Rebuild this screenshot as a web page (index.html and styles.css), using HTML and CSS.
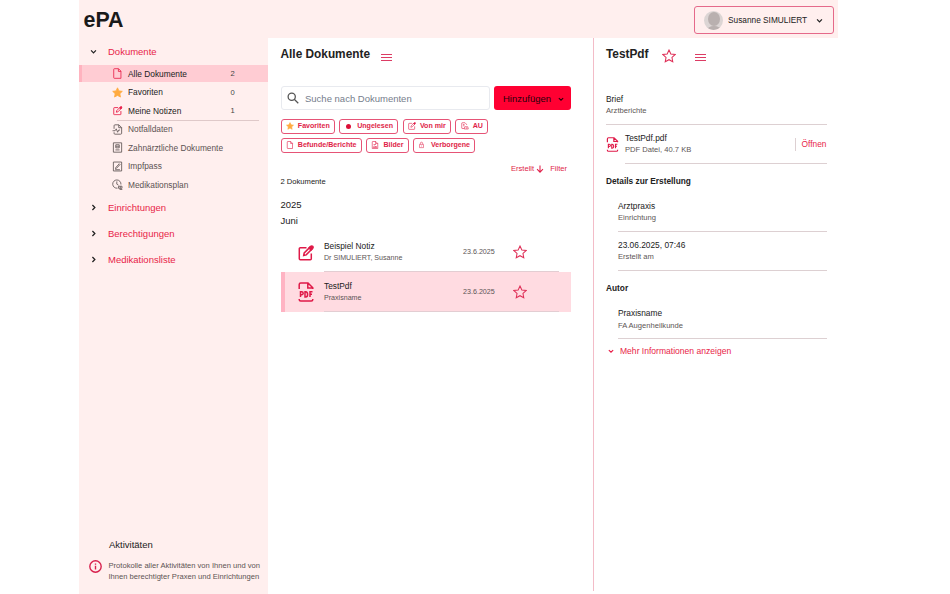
FILE: index.html
```html
<!DOCTYPE html>
<html lang="de">
<head>
  <meta charset="UTF-8">
  <meta name="viewport" content="width=device-width, initial-scale=1.0">
  <title>ePA</title>
  <link rel="stylesheet" href="styles.css">
</head>
<body>

<!-- Icons -->
<svg class="sprite" xmlns="http://www.w3.org/2000/svg">
  <symbol id="i-down" viewBox="0 0 10 10"><path d="M2.300 3.800l2.700 2.700 2.700-2.700"/></symbol>
  <symbol id="i-right" viewBox="0 0 10 10"><path d="M3.800 2.300l2.700 2.700-2.700 2.700"/></symbol>
  <symbol id="i-file" viewBox="0 0 16 16"><path d="M3.500 1h6L13 4.500V15H3.500a1 1 0 0 1-1-1V2a1 1 0 0 1 1-1zM9.300 1.200V5H13"/></symbol>
  <symbol id="i-star" viewBox="0 0 16 16"><path d="M8 1.200l2.100 4.500 4.900.6-3.600 3.400.9 4.900L8 12.200l-4.300 2.400.9-4.900L1 6.300l4.900-.6z"/></symbol>
  <symbol id="i-edit" viewBox="0 0 16 16"><path d="M8.500 2.700H2.300a1 1 0 0 0-1 1v10a1 1 0 0 0 1 1h10a1 1 0 0 0 1-1V8.500M5.700 10.500l.5-2.600L12 2.100l2 2-5.800 5.800z"/><path class="fill" d="M11 3l2-1.900q1-.5 1.700.2t.2 1.700L13 5z"/></symbol>
  <symbol id="i-emergency" viewBox="0 0 16 16"><path d="M3 7V2.500A1.300 1.300 0 0 1 4.300 1.200H10l4 4v8.300a1.300 1.300 0 0 1-1.300 1.300H4.300A1.300 1.300 0 0 1 3 13.500V12M9.800 1.400v4H14M.8 9.800h3.700L6.200 7l2 5 1.500-3.200h2"/></symbol>
  <symbol id="i-tooth" viewBox="0 0 16 16"><path d="M2 1.200h12v13.600H2zM5.500 4h5v4.500h-5zM5.500 6.200h5M5 11.500h6"/></symbol>
  <symbol id="i-vaccine" viewBox="0 0 16 16"><path d="M2 1.500h12v13H2zM5.500 9.500l5-5.500 1.200 1.200-5 5.300-1.700.5zM4.500 12.700h7"/></symbol>
  <symbol id="i-plan" viewBox="0 0 16 16"><path d="M8 13.300A6 6 0 1 1 13 8M7 3.500v4l2.500 1.500M9.500 10.500h5v3h-5zM11 15.200h4M12 10.500v3"/></symbol>
  <symbol id="i-au" viewBox="0 0 16 16"><path d="M6 13H2.500a1 1 0 0 1-1-1V2.500a1 1 0 0 1 1-1H8L11 4.500V6M4 5h3M4 7.500h3M7.500 9.500h6l1 4.500h-8zM10 12h2"/></symbol>
  <symbol id="i-image" viewBox="0 0 16 16"><path d="M3.500 1h6L13.500 5v10h-11V2a1 1 0 0 1 1-1zM9 1v4h4.500M4.500 13l2.200-3.500 2 2.200L10 10l1.500 3zM5 7h5"/></symbol>
  <symbol id="i-lock" viewBox="0 0 16 16"><path d="M3.500 6.500h9V14h-9zM5.500 6.300V4a2.500 2.500 0 0 1 5 0v2.300M8 9.300v2"/></symbol>
  <symbol id="i-pdf" viewBox="0 0 16 20"><path d="M1.200 7V2.500A1.500 1.500 0 0 1 2.700 1H10l4.800 4.800V7M9.800 1.200V6h4.800M1.200 17v.5A1.500 1.500 0 0 0 2.700 19h10.600a1.500 1.500 0 0 0 1.500-1.500V17"/><path class="letters" d="M2.500 15V9.700h1.200a1.500 1.500 0 0 1 0 3H2.500M7 9.700V15h.7q1.900-.1 1.900-2.600T7.700 9.700zM12 15V9.700h2.500M12 12.300h2"/></symbol>
  <symbol id="i-info" viewBox="0 0 16 16"><circle cx="8" cy="8" r="7"/><path d="M8 7v4.800M8 4.200v1.600"/></symbol>
  <symbol id="i-search" viewBox="0 0 16 16"><circle cx="6.300" cy="6.300" r="4.800"/><path d="M9.700 9.700l5.300 5.300"/></symbol>
  <symbol id="i-arrow" viewBox="0 0 10 10"><path d="M5 .5v8.500M1.300 5.300L5 9l3.700-3.700"/></symbol>
</svg>

<div class="app">
  <header class="header">
    <h1>ePA</h1>
    <button class="account">
      <span class="avatar"></span>
      <span>Susanne SIMULIERT</span>
      <svg class="chevron"><use href="#i-down"/></svg>
    </button>
  </header>

  <div class="columns">
    <nav class="sidebar">
      <div class="group open"><svg class="chevron"><use href="#i-down"/></svg>Dokumente</div>
      <ul class="menu">
        <li class="active"><svg class="icon red"><use href="#i-file"/></svg><span>Alle Dokumente</span><b>2</b></li>
        <li><svg class="icon gold"><use href="#i-star"/></svg><span>Favoriten</span><b>0</b></li>
        <li><svg class="icon red edit"><use href="#i-edit"/></svg><span>Meine Notizen</span><b>1</b></li>
      </ul>
      <ul class="menu categories">
        <li><svg class="icon"><use href="#i-emergency"/></svg><span>Notfalldaten</span></li>
        <li><svg class="icon"><use href="#i-tooth"/></svg><span>Zahnärztliche Dokumente</span></li>
        <li><svg class="icon"><use href="#i-vaccine"/></svg><span>Impfpass</span></li>
        <li><svg class="icon"><use href="#i-plan"/></svg><span>Medikationsplan</span></li>
      </ul>
      <div class="group"><svg class="chevron"><use href="#i-right"/></svg>Einrichtungen</div>
      <div class="group"><svg class="chevron"><use href="#i-right"/></svg>Berechtigungen</div>
      <div class="group"><svg class="chevron"><use href="#i-right"/></svg>Medikationsliste</div>

      <div class="activities">
        <h3>Aktivitäten</h3>
        <div class="activities-info">
          <svg class="info"><use href="#i-info"/></svg>
          <p>Protokolle aller Aktivitäten von Ihnen und von<br>Ihnen berechtigter Praxen und Einrichtungen</p>
        </div>
      </div>
    </nav>

    <main class="documents">
      <div class="title">
        <h2>Alle Dokumente</h2>
        <span class="burger"></span>
      </div>
      <div class="toolbar">
        <div class="search"><svg><use href="#i-search"/></svg>Suche nach Dokumenten</div>
        <button class="add">Hinzufügen<svg class="chevron"><use href="#i-down"/></svg></button>
      </div>
      <div class="chips">
        <span class="chip"><svg class="gold"><use href="#i-star"/></svg>Favoriten</span>
        <span class="chip"><i class="dot"></i>Ungelesen</span>
        <span class="chip"><svg><use href="#i-edit"/></svg>Von mir</span>
        <span class="chip"><svg><use href="#i-au"/></svg>AU</span>
        <span class="chip"><svg><use href="#i-file"/></svg>Befunde/Berichte</span>
        <span class="chip"><svg><use href="#i-image"/></svg>Bilder</span>
        <span class="chip lock"><svg><use href="#i-lock"/></svg>Verborgene</span>
      </div>
      <div class="sort">
        <span>Erstellt</span><svg><use href="#i-arrow"/></svg><span>Filter</span>
      </div>
      <p class="count">2 Dokumente</p>
      <p class="period">2025</p>
      <p class="period">Juni</p>

      <div class="doc">
        <svg class="doc-icon note"><use href="#i-edit"/></svg>
        <div class="doc-body">
          <div class="doc-name">Beispiel Notiz<small>Dr SIMULIERT, Susanne</small></div>
          <time>23.6.2025</time>
          <svg class="star"><use href="#i-star"/></svg>
        </div>
      </div>
      <div class="doc selected">
        <svg class="doc-icon pdf"><use href="#i-pdf"/></svg>
        <div class="doc-body">
          <div class="doc-name">TestPdf<small>Praxisname</small></div>
          <time>23.6.2025</time>
          <svg class="star"><use href="#i-star"/></svg>
        </div>
      </div>
    </main>

    <aside class="details">
      <div class="title">
        <h2>TestPdf</h2>
        <svg class="star"><use href="#i-star"/></svg>
        <span class="burger"></span>
      </div>
      <div class="field type">Brief<small>Arztberichte</small></div>
      <div class="file">
        <svg class="pdf"><use href="#i-pdf"/></svg>
        <div class="file-body">
          <div class="file-name">TestPdf.pdf<small>PDF Datei, 40.7 KB</small></div>
          <a class="open-link">Öffnen</a>
        </div>
      </div>
      <h4>Details zur Erstellung</h4>
      <div class="field indent">Arztpraxis<small>Einrichtung</small></div>
      <div class="field indent">23.06.2025, 07:46<small>Erstellt am</small></div>
      <h4 class="author">Autor</h4>
      <div class="field indent">Praxisname<small>FA Augenheilkunde</small></div>
      <a class="more"><svg class="chevron"><use href="#i-down"/></svg>Mehr Informationen anzeigen</a>
    </aside>
  </div>
</div>

</body>
</html>
```
FILE: styles.css
```css
* {
  box-sizing: border-box;
}

body {
  margin: 0;
  background: #fff;
  color: #222;
  font-family: "Liberation Sans", Arial, sans-serif;
  font-size: 8.35px;
}

h1, h2, h3, h4, p, ul {
  margin: 0;
  padding: 0;
}

button {
  font-family: inherit;
  cursor: pointer;
}

svg {
  flex: none;
  fill: none;
  stroke: currentColor;
  stroke-width: 1.2;
}

small {
  display: block;
  color: #5c5555;
}

.sprite {
  display: none;
}

.fill {
  fill: currentColor;
}

.letters {
  stroke-width: 1.5;
}

.app {
  width: 759px;
  height: 594px;
  margin-left: 79px;
}

/* Header */
.header {
  display: flex;
  align-items: center;
  justify-content: space-between;
  height: 38px;
  padding: 0 4px 0 4.5px;
  background: #ffefee;
}

.header h1 {
  padding-top: 2px;
  font-size: 21.4px;
  line-height: 24px;
  color: #1a1a1a;
}

.account {
  display: flex;
  align-items: center;
  width: 140px;
  height: 28px;
  margin-top: 2px;
  padding: 0 9px;
  border: 1px solid #e5698a;
  border-radius: 3px;
  background: none;
  color: #222;
  font-size: 8.3px;
}

.avatar {
  position: relative;
  width: 19px;
  height: 19px;
  margin-right: 5px;
  border-radius: 50%;
  background: #dcd5d4;
  overflow: hidden;
}

.avatar::before,
.avatar::after {
  content: "";
  position: absolute;
  border-radius: 50%;
  background: #b9b0af;
}

.avatar::before {
  left: 3.5px;
  top: 1px;
  width: 12px;
  height: 14px;
}

.avatar::after {
  left: 2.5px;
  top: 15px;
  width: 14px;
  height: 8px;
}

.chevron {
  width: 9px;
  height: 9px;
  stroke-width: 1.4;
}

.account .chevron {
  margin-left: 7.5px;
}

.columns {
  display: flex;
  height: 556px;
}

/* Sidebar */
.sidebar {
  display: flex;
  flex-direction: column;
  width: 189px;
  background: #ffefee;
}

.group {
  display: flex;
  align-items: center;
  height: 26px;
  padding-left: 10px;
  color: #e81e48;
  font-size: 9.5px;
}

.group.open {
  height: 27px;
}

.group .chevron {
  margin-right: 10px;
  color: #222;
}

.menu {
  list-style: none;
}

.menu li {
  display: flex;
  align-items: center;
  height: 17px;
  margin-bottom: 1.5px;
  padding-left: 33px;
}

.menu li.active {
  padding-left: 30px;
  border-left: 3px solid #ffb3bf;
  background: #ffccd3;
}

.menu span {
  width: 102.5px;
  white-space: nowrap;
}

.menu b {
  color: #444;
  font-size: 7.6px;
  font-weight: normal;
}

.icon {
  width: 11px;
  height: 11px;
  margin-right: 5px;
}

.icon.edit {
  width: 9.5px;
  height: 9.5px;
  margin: 1px 5.5px 0 1px;
  stroke-width: 1.5;
}

.red {
  color: #e81e48;
}

svg.gold {
  fill: #ffab40;
  stroke: #ffab40;
}

.categories {
  margin-top: -1px;
  color: #5c5353;
}

.categories::before {
  content: "";
  display: block;
  width: 142px;
  margin-left: 38px;
  border-top: 1px solid #dfc9c9;
}

.activities {
  margin-top: auto;
  padding: 0 8px 12.5px 10px;
}

.activities h3 {
  margin-bottom: 9px;
  padding-left: 20px;
  font-size: 9.5px;
  font-weight: normal;
  line-height: 12px;
}

.activities-info {
  display: flex;
  align-items: center;
}

.activities p {
  color: #5c5353;
  font-size: 7.6px;
  line-height: 11px;
  white-space: nowrap;
}

.info {
  width: 13px;
  height: 13px;
  margin: -8px 6.5px 0 0;
  color: #d81f4c;
  stroke-width: 1.7;
}

/* Document list */
.documents {
  width: 325px;
  padding-left: 12.5px;
}

.title {
  display: flex;
  height: 48px;
  padding-top: 8px;
}

h2 {
  font-size: 11.85px;
  line-height: 16px;
}

.burger {
  width: 11px;
  height: 8px;
  margin: 8px 0 0 11px;
  background: repeating-linear-gradient(#dc3c64 0 1.5px, #fff 1.5px 3px);
}

.toolbar {
  display: flex;
  gap: 4px;
}

.search {
  display: flex;
  align-items: center;
  width: 209px;
  height: 24px;
  padding-left: 5px;
  border: 1px solid #e8eaef;
  border-radius: 3px;
  color: #757d8c;
  font-size: 9.5px;
}

.search svg {
  width: 12px;
  height: 12px;
  margin-right: 6.5px;
  color: #555;
  stroke-width: 1.7;
}

.add {
  display: flex;
  align-items: center;
  width: 77.5px;
  height: 24px;
  padding: 0 0 0 9.5px;
  border: none;
  border-radius: 3px;
  background: #ff0032;
  color: #28000a;
  font-size: 9.5px;
}

.add .chevron {
  width: 8px;
  height: 8px;
  margin: 2px 0 0 6px;
}

.chips {
  display: flex;
  flex-wrap: wrap;
  gap: 4.5px 4.3px;
  width: 220px;
  margin-top: 9px;
}

.chip {
  display: flex;
  align-items: center;
  height: 14.5px;
  padding: 0 4.3px;
  border: 1px solid #e65376;
  border-radius: 3px;
  color: #e01e48;
  font-size: 7.1px;
  font-weight: bold;
}

.chip svg {
  width: 8px;
  height: 8px;
  margin-right: 4px;
}

.chip.lock svg {
  width: 7px;
  height: 8px;
  margin: -1px 5.5px 0 0;
}

.dot {
  width: 5px;
  height: 5px;
  margin: 0 6px 0 1.5px;
  border-radius: 50%;
  background: #dc1038;
}

.sort {
  display: flex;
  align-items: center;
  width: 286.5px;
  justify-content: flex-end;
  margin-top: 11.5px;
  color: #e01e48;
  font-size: 7.6px;
  line-height: 10px;
}

.sort svg {
  width: 8px;
  height: 8px;
  margin: 0 6.5px 0 1.5px;
  stroke-width: 1.3;
}

.count {
  margin: 3px 0 11px;
  font-size: 7.6px;
  line-height: 9px;
}

.period {
  font-size: 9.5px;
  line-height: 16px;
}

.doc {
  display: flex;
  align-items: center;
  width: 290.5px;
  height: 40px;
  padding-left: 17px;
}

.period + .doc {
  margin-top: 3px;
}

.doc.selected {
  padding-left: 13px;
  border-left: 4px solid #ffb3c3;
  background: #ffdbe1;
}

.doc-icon {
  width: 16px;
  height: 16px;
  margin-right: 10.5px;
  color: #df1a48;
}

.doc-icon.note {
  margin-top: 2px;
  stroke-width: 1.5;
}

.doc-icon.pdf {
  height: 20px;
  stroke-width: 1.5;
}

.doc-body {
  display: flex;
  align-items: center;
  width: 234.5px;
  height: 40px;
  border-bottom: 1px solid #e3cdd2;
}

.doc-name {
  width: 139px;
  line-height: 12px;
}

.doc-name small {
  font-size: 7.1px;
}

time {
  width: 49.5px;
  color: #5c5555;
  font-size: 7.15px;
}

.star {
  width: 14px;
  height: 14px;
  color: #df3058;
  stroke-width: 1.2;
}

/* Document details */
.details {
  flex: 1;
  height: 553px;
  padding: 0 11.5px 0 12px;
  border-left: 1px solid #f3bcc8;
}

.details .star {
  margin: 3px 0 0 13px;
}

.details .burger {
  margin-left: 19.5px;
}

.field {
  height: 39px;
  padding-top: 7px;
  border-bottom: 1px solid #ddd0d2;
  line-height: 12.5px;
}

.field.type {
  padding-top: 6.5px;
}

.field small,
.file small {
  font-size: 7.6px;
}

.indent {
  margin-left: 12px;
}

.file {
  display: flex;
  align-items: center;
  height: 39px;
}

.file .pdf {
  width: 13px;
  height: 15px;
  margin-right: 6px;
  color: #df1a48;
  stroke-width: 1.6;
}

.file-body {
  display: flex;
  align-items: center;
  justify-content: space-between;
  flex: 1;
  height: 39px;
  border-bottom: 1px solid #ddd0d2;
}

.file-name {
  line-height: 12px;
}

.open-link {
  padding-left: 6px;
  border-left: 1px solid #ddd0d2;
  color: #e81e48;
  line-height: 13px;
}

h4 {
  margin: 11px 0 5.5px;
  font-size: 8.3px;
  line-height: 12px;
}

h4.author {
  margin-bottom: 6.5px;
}

.more {
  display: flex;
  align-items: center;
  margin-top: 5.5px;
  color: #e81e48;
  font-size: 8.55px;
  line-height: 12px;
}

.more .chevron {
  width: 8px;
  height: 8px;
  margin: 1px 5px 0 1px;
}
```
